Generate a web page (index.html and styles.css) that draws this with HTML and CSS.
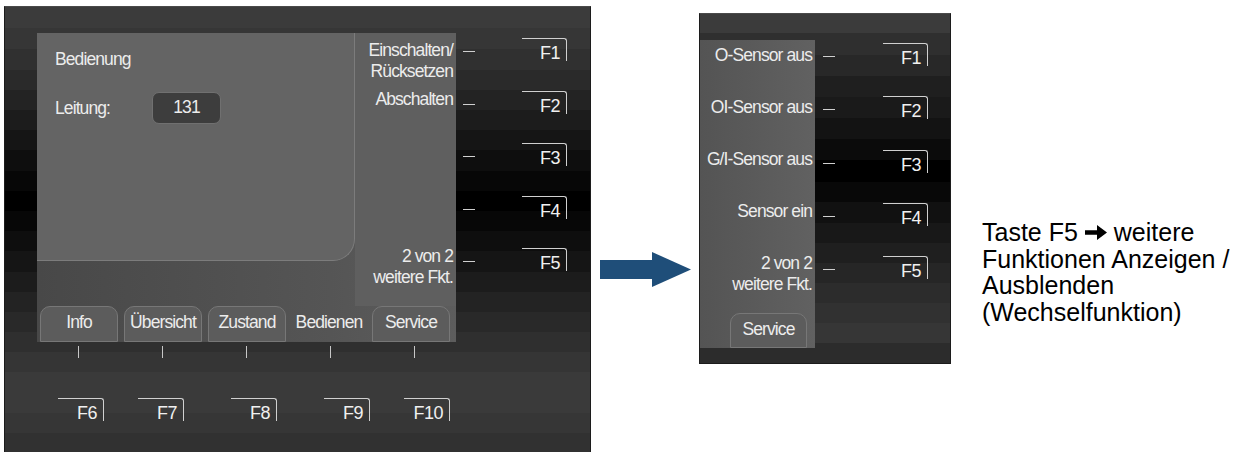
FILE: index.html
```html
<!DOCTYPE html>
<html lang="de">
<head>
  <meta charset="UTF-8" />
  <meta name="viewport" content="width=device-width, initial-scale=1.0"/>
  <title>Bedienung F-Tasten</title>
  <link rel="stylesheet" href="styles.css">
</head>
<body>
  <div class="page">

    <div class="screen screen-main">
      <div class="main-col">
        <div class="panel">
          <div class="panel-top">
            <div class="content">
              <div class="title">Bedienung</div>
              <div class="field">
                <span class="field-label">Leitung:</span>
                <span class="field-value">131</span>
              </div>
            </div>
            <div class="labels">
              <div class="fn-label first">Einschalten/<br>Rücksetzen</div>
              <div class="fn-label">Abschalten</div>
              <div class="fn-label"></div>
              <div class="fn-label"></div>
              <div class="fn-label">2 von 2<br>weitere Fkt.</div>
            </div>
          </div>
          <div class="tabs">
            <div class="tab">Info</div>
            <div class="tab">Übersicht</div>
            <div class="tab">Zustand</div>
            <div class="tab active">Bedienen</div>
            <div class="tab">Service</div>
          </div>
        </div>
        <div class="ticks">
          <span></span><span></span><span></span><span></span><span></span>
        </div>
        <div class="bottom-keys">
          <span class="fkey">F6</span>
          <span class="fkey">F7</span>
          <span class="fkey push">F8</span>
          <span class="fkey push">F9</span>
          <span class="fkey">F10</span>
        </div>
      </div>
      <div class="side-keys">
        <div class="key-row"><span class="dash"></span><span class="fkey">F1</span></div>
        <div class="key-row"><span class="dash"></span><span class="fkey">F2</span></div>
        <div class="key-row"><span class="dash"></span><span class="fkey">F3</span></div>
        <div class="key-row"><span class="dash"></span><span class="fkey">F4</span></div>
        <div class="key-row"><span class="dash"></span><span class="fkey">F5</span></div>
      </div>
    </div>

    <svg class="arrow" viewBox="0 0 91 35" width="91" height="35">
      <rect x="0" y="8" width="53" height="19" fill="#1f4e79"/>
      <polygon points="52,0 91,17.5 52,35" fill="#1f4e79"/>
    </svg>

    <div class="screen screen-sub">
      <div class="sub-panel">
        <div class="labels labels-sub">
          <div class="fn-label">O-Sensor aus</div>
          <div class="fn-label">OI-Sensor aus</div>
          <div class="fn-label">G/I-Sensor aus</div>
          <div class="fn-label">Sensor ein</div>
          <div class="fn-label">2 von 2<br>weitere Fkt.</div>
        </div>
        <div class="tab tab-sub">Service</div>
      </div>
      <div class="side-keys side-keys-sub">
        <div class="key-row"><span class="dash"></span><span class="fkey">F1</span></div>
        <div class="key-row"><span class="dash"></span><span class="fkey">F2</span></div>
        <div class="key-row"><span class="dash"></span><span class="fkey">F3</span></div>
        <div class="key-row"><span class="dash"></span><span class="fkey">F4</span></div>
        <div class="key-row"><span class="dash"></span><span class="fkey">F5</span></div>
      </div>
    </div>

    <p class="note">Taste F5 <svg class="note-arrow" viewBox="0 0 22 15" width="22" height="15"><path d="M0 5.2h12V0l10 7.5-10 7.5V9.8H0z" fill="#000"/></svg> weitere<br>Funktionen Anzeigen /<br>Ausblenden<br>(Wechselfunktion)</p>

  </div>
</body>
</html>
```

FILE: styles.css
```css
body {
  margin: 0;
  height: 452px;
  overflow: hidden;
  background-color: #fff;
  font-family: "Liberation Sans", Arial, sans-serif;
}

.page {
  display: flex;
  align-items: flex-start;
  padding: 6px 0 0 4px;
}

/* device screens */
.screen {
  box-sizing: border-box;
  border: 1px solid #1c1c1c;
  border-top-color: #4a4a4a;
  display: flex;
  color: #ececec;
  font-size: 17.5px;
  letter-spacing: -0.9px;
  white-space: nowrap;
}

.screen-main {
  width: 587px;
  height: 460px;
  padding: 26px 0 0 32px;
  background: linear-gradient(to bottom,
    #3b3b3b 0 21px, #363636 21px 42px, #303030 42px 63px, #2a2a2a 63px 83px,
    #232323 83px 103px, #1c1c1c 103px 123px, #151515 123px 143px, #0e0e0e 143px 164px,
    #070707 164px 184px, #000 184px 204px, #070707 204px 224px, #0e0e0e 224px 244px,
    #151515 244px 265px, #1c1c1c 265px 285px, #232323 285px 305px, #292929 305px 325px,
    #2f2f2f 325px 345px, #353535 345px 365px, #3a3a3a 365px 406px, #363636 406px 426px,
    #313131 426px);
}

.screen-sub {
  width: 252px;
  height: 351px;
  margin: 7px 0 0 8px;
  padding-top: 26px;
  background: linear-gradient(to bottom,
    #3b3b3b 0 19px, #2f2f2f 19px 41px, #282828 41px 62px, #1f1f1f 62px 83px,
    #1a1a1a 83px 104px, #131313 104px 125px, #0b0b0b 125px 146px, #000 146px 168px,
    #080808 168px 188px, #111 188px 209px, #181818 209px 229px, #1f1f1f 229px 249px,
    #262626 249px 269px, #2c2c2c 269px 289px, #313131 289px 309px, #363636 309px 329px,
    #2c2c2c 329px);
}

.main-col {
  width: 419px;
}

.panel {
  height: 309px;
  display: flex;
  flex-direction: column;
  background: linear-gradient(to right, #484848, #555 70%, #5d5d5d);
}

.panel-top {
  display: flex;
  height: 273px;
}

.content {
  width: 318px;
  height: 228px;
  box-sizing: border-box;
  padding: 17px 0 0 18px;
  background-color: #646464;
  border-right: 1px solid #7c7c7c;
  border-bottom: 1px solid #7c7c7c;
  border-bottom-right-radius: 22px;
}

.title {
  line-height: 19px;
}

.field {
  display: flex;
  align-items: center;
  margin-top: 23px;
}

.field-label {
  width: 97px;
}

.field-value {
  width: 69px;
  height: 32px;
  box-sizing: border-box;
  border: 1px solid #707070;
  border-radius: 7px;
  background-color: #3d3d3d;
  text-align: center;
  line-height: 29px;
}

/* labels next to the F keys */
.labels {
  flex: 1;
  display: grid;
  grid-auto-rows: 52.25px;
  align-content: start;
  padding: 4px 3px 0 0;
  background-color: #5f5f5f;
  text-align: right;
}

.fn-label {
  line-height: 20.5px;
}

.fn-label.first {
  margin-top: 3px;
}

.labels-sub {
  flex: none;
  grid-auto-rows: 52px;
  padding-top: 5px;
  background: none;
}

/* tabs */
.tabs {
  display: flex;
  gap: 6px;
  padding-left: 3px;
  height: 36px;
}

.tab {
  width: 78px;
  height: 36px;
  box-sizing: border-box;
  border: 1px solid #777;
  border-radius: 10px 10px 0 0;
  background-color: #5c5c5c;
  text-align: center;
  line-height: 30px;
}

.tab.active {
  width: 74px;
  background: none;
  border-color: transparent;
}

.sub-panel {
  width: 115px;
  height: 308px;
  display: flex;
  flex-direction: column;
  background: linear-gradient(to right, #545454, #616161);
}

.tab-sub {
  width: 77px;
  height: 35px;
  margin: auto 0 0 30px;
}

.ticks {
  display: flex;
  gap: 83px;
  height: 12px;
  margin-top: 4px;
  padding-left: 41px;
}

.ticks span {
  width: 1px;
  background-color: #c8c8c8;
}

/* F keys */
.fkey {
  display: block;
  width: 45px;
  height: 23px;
  box-sizing: border-box;
  padding: 6px 6px 0 0;
  border-top: 1px solid #d0d0d0;
  border-right: 1px solid #d0d0d0;
  border-top-right-radius: 3px;
  text-align: right;
  font-size: 18px;
  letter-spacing: -0.5px;
  line-height: 17px;
  color: #f0f0f0;
}

.bottom-keys {
  display: flex;
  gap: 34px;
  margin-top: 40px;
  padding-left: 21px;
}

.bottom-keys .fkey {
  width: 46px;
}

.bottom-keys .push {
  margin-left: 13px;
}

.side-keys {
  display: grid;
  grid-auto-rows: 52.5px;
  align-content: start;
  padding-top: 5px;
}

.side-keys-sub {
  grid-auto-rows: 53.25px;
  padding-top: 3px;
}

.key-row {
  display: flex;
  align-items: flex-start;
}

.dash {
  width: 12px;
  height: 1px;
  margin: 13px 0 0 7px;
  background-color: #d0d0d0;
}

.key-row .fkey {
  margin-left: 47px;
}

.side-keys-sub .dash {
  margin-left: 8px;
}

.side-keys-sub .fkey {
  margin-left: 48px;
}

.arrow {
  flex: none;
  margin: 246px 0 0 9px;
}

.note {
  margin: 213px 0 0 31px;
  white-space: nowrap;
  font-size: 25px;
  line-height: 26.5px;
  color: #000;
}

.note-arrow {
  vertical-align: 1px;
}
```
